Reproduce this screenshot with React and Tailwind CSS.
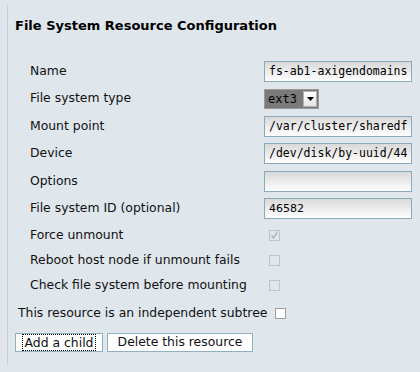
import React from "react";

const inputCls =
  "w-[148px] h-[21px] border border-[#8aaabb] bg-gradient-to-b from-[#d9d9d9] to-white flex items-center pl-[4px] overflow-hidden whitespace-nowrap text-black";

function TextRow({ label, value, mono = true }) {
  return (
    <div className="flex items-center h-[27.5px]">
      <div className="w-[249px] pl-[15px]">{label}</div>
      <div className={inputCls}>
        <span
          className={
            mono
              ? "font-['DejaVu_Sans_Mono',monospace] text-[11.5px]"
              : "text-[11px]"
          }
        >
          {value}
        </span>
      </div>
    </div>
  );
}

function Box({ checked }) {
  return (
    <div className="w-[11px] h-[11px] border border-[#c4c4c4] relative">
      {checked && (
        <svg
          viewBox="0 0 11 11"
          className="absolute -left-px -top-px w-[11px] h-[11px]"
        >
          <path d="M2.5 5.5 L4.5 8 L8.5 2" stroke="#b8b8b8" strokeWidth="1.6" fill="none" />
        </svg>
      )}
    </div>
  );
}

function CheckRow({ label, checked }) {
  return (
    <div className="flex items-center h-[25px]">
      <div className="w-[254px] pl-[15px]">{label}</div>
      <Box checked={checked} />
    </div>
  );
}

export default function App() {
  return (
    <div className="w-[420px] h-[372px] bg-[#dfe6ec] pt-[5px] font-['DejaVu_Sans',sans-serif] text-[12.4px] text-[#111]">
      <div className="ml-[7px] border-l border-[#c6ced4] h-[359px] pl-[7px]">
        <div className="h-[41px] flex items-center font-bold text-[13px] text-black">
          File System Resource Configuration
        </div>
        <div className="mt-[11.5px]">
          <TextRow label="Name" value="fs-ab1-axigendomains" />
          <div className="flex items-center h-[27.5px]">
            <div className="w-[249px] pl-[15px]">File system type</div>
            <div className="w-[55px] h-[20px] bg-[#7a7a7a] border border-[#9a9a9a] flex items-center relative">
              <span className="font-['DejaVu_Sans_Mono',monospace] text-[12px] text-black pl-[3px]">ext3</span>
              <div className="absolute right-[1px] top-[1px] w-[14px] h-[16px] bg-gradient-to-b from-white to-[#e4e4e4] border border-[#b0b0b0] flex items-center justify-center">
                <svg viewBox="0 0 7 4" className="w-[7px] h-[4px]">
                  <path d="M0 0 L7 0 L3.5 4 Z" fill="#000" />
                </svg>
              </div>
            </div>
          </div>
          <TextRow label="Mount point" value="/var/cluster/sharedf" />
          <TextRow label="Device" value="/dev/disk/by-uuid/44" />
          <TextRow label="Options" value="" />
          <TextRow label="File system ID (optional)" value="46582" mono={false} />
        </div>
        <CheckRow label="Force unmount" checked />
        <CheckRow label="Reboot host node if unmount fails" />
        <CheckRow label="Check file system before mounting" />
        <div className="flex items-center h-[31px] pl-[3px]">
          <span>This resource is an independent subtree</span>
          <div className="ml-[8px] w-[11px] h-[11px] border border-[#a09ca0] bg-white" />
        </div>
        <div className="flex mt-[4px] gap-[4px]">
          <div className="h-[19px] w-[88px] border border-[#8fb0c0] bg-white flex items-center justify-center">
            <span className="outline outline-1 outline-dotted outline-black px-[2px] leading-[15px]">Add a child</span>
          </div>
          <div className="h-[19px] w-[146px] border border-[#8fb0c0] bg-white flex items-center justify-center">
            <span>Delete this resource</span>
          </div>
        </div>
      </div>
    </div>
  );
}
